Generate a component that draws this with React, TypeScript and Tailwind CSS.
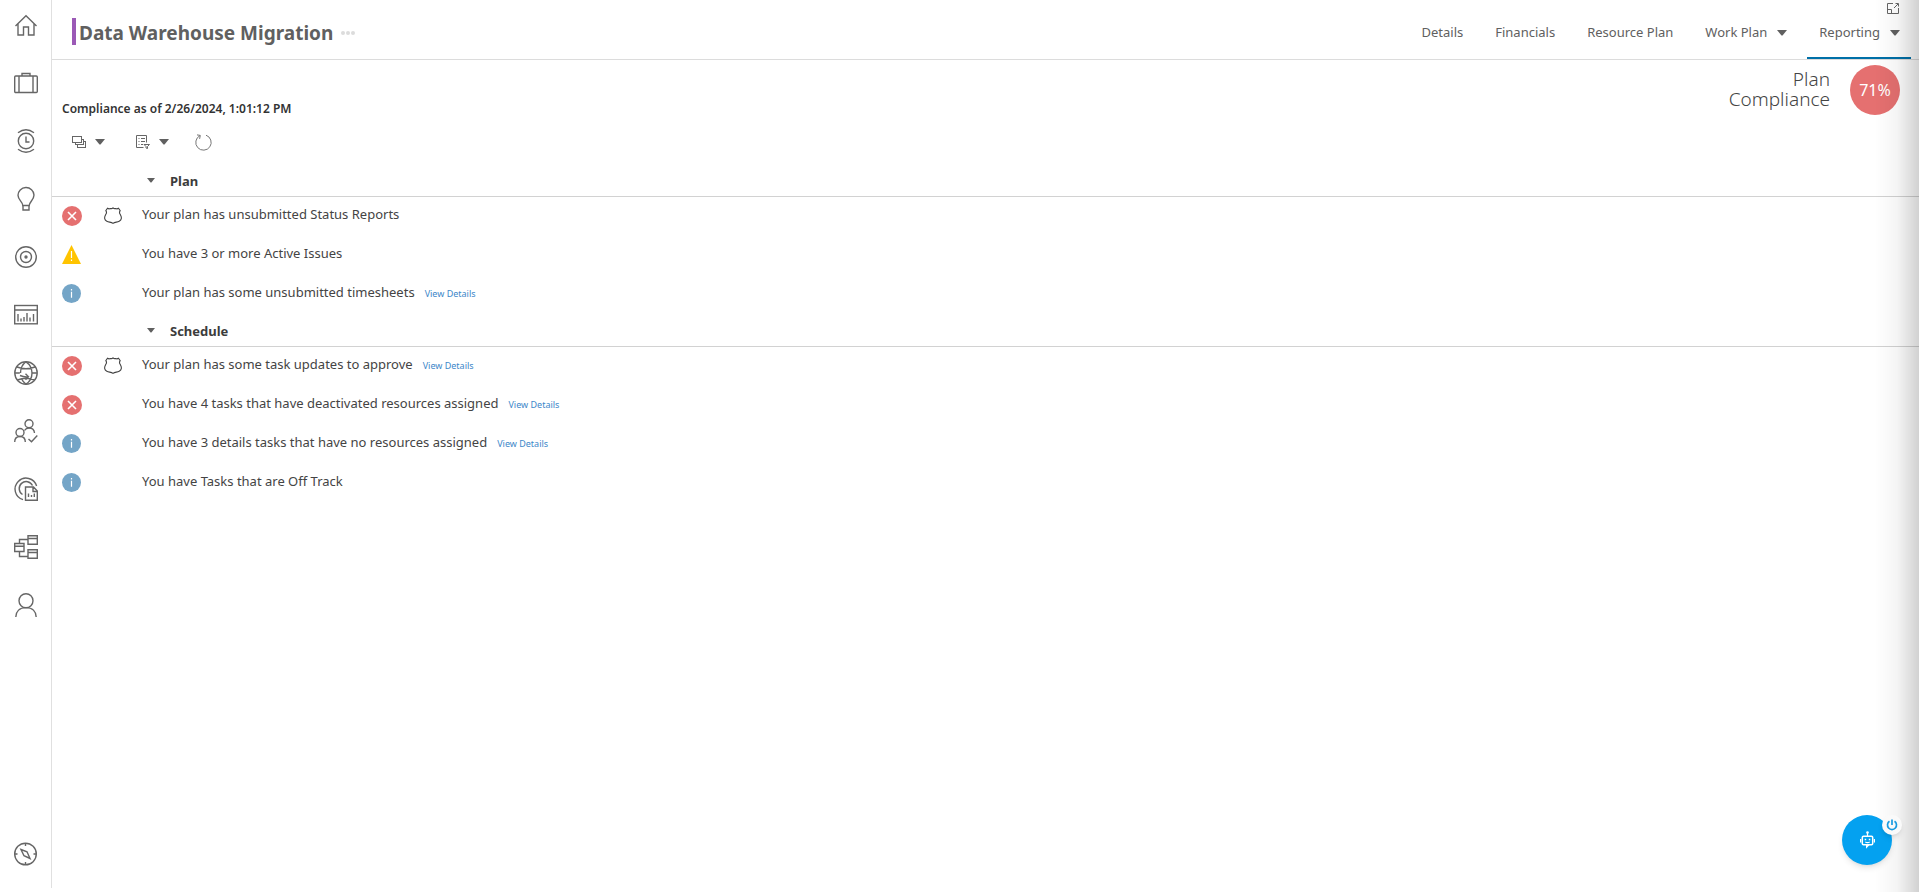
import React from 'react';

type Status = 'error' | 'warning' | 'info';

interface Rule {
  status: Status;
  text: string;
  required?: boolean;
  link?: boolean;
}

interface Group {
  name: string;
  rules: Rule[];
}

const groups: Group[] = [
  {
    name: 'Plan',
    rules: [
      { status: 'error', text: 'Your plan has unsubmitted Status Reports', required: true },
      { status: 'warning', text: 'You have 3 or more Active Issues' },
      { status: 'info', text: 'Your plan has some unsubmitted timesheets', link: true },
    ],
  },
  {
    name: 'Schedule',
    rules: [
      { status: 'error', text: 'Your plan has some task updates to approve', required: true, link: true },
      { status: 'error', text: 'You have 4 tasks that have deactivated resources assigned', link: true },
      { status: 'info', text: 'You have 3 details tasks that have no resources assigned', link: true },
      { status: 'info', text: 'You have Tasks that are Off Track' },
    ],
  },
];

const tabs = [
  { label: 'Details' },
  { label: 'Financials' },
  { label: 'Resource Plan' },
  { label: 'Work Plan', menu: true },
  { label: 'Reporting', menu: true, active: true },
];

const navItems: { label: string; icon: React.ReactNode }[] = [
  {
    label: 'Home',
    icon: <path d="M1.5 13 12 2.8 22.5 13M4 11v11h5.5v-8h5v8H20V11" />,
  },
  {
    label: 'Portfolio',
    icon: (
      <>
        <rect x="0.7" y="5" width="22.6" height="16.5" rx="1" />
        <path d="M5 5v16.5M19 5v16.5M8 5V2.500h8V5" />
      </>
    ),
  },
  {
    label: 'Time',
    icon: (
      <>
        <circle cx="12" cy="12" r="7.7" />
        <path d="M12 7.500V13h3.500M4 3.800q8-6 16 0M4 20.200q8 6 16 0" />
      </>
    ),
  },
  {
    label: 'Ideas',
    icon: (
      <>
        <path d="M8.800 18.500C8.800 15 4 13 4 8.300a8 7.600 0 0 1 16-.3C20 13 15.200 15 15.200 18.500z" />
        <path d="M9 18.500V23h6v-4.500" />
      </>
    ),
  },
  {
    label: 'Goals',
    icon: (
      <>
        <circle cx="12" cy="12" r="10.3" />
        <circle cx="12" cy="12" r="5.5" />
        <circle cx="12" cy="12" r="1" fill="currentColor" />
      </>
    ),
  },
  {
    label: 'Dashboards',
    icon: (
      <>
        <rect x="0.7" y="2.5" width="22.6" height="18.3" />
        <path d="M.7 7h22.600M4 11v7.500M7 15.500v3M10 14v4.500M13 10v8.500M16 14.500v4M19.500 11v7.500" />
      </>
    ),
  },
  {
    label: 'Global',
    icon: (
      <>
        <circle cx="12" cy="12" r="11.2" />
        <path d="M3 6q9 3.500 18 0M3.500 19q8.500-3.500 17 0M6 14.500q4 1.800 8.500 1.300M11.500 12.800l3 3-3 3M6.500 12C6.500 7 9 3 12 .8c4 2.700 6 7 6 11.200 0 4.500-2 8.500-6 11.200-2-1.500-3.300-3-4.200-5M.8 12h5M18 12h5" />
      </>
    ),
  },
  {
    label: 'Resources',
    icon: (
      <>
        <circle cx="15" cy="4.8" r="4" />
        <circle cx="6" cy="13.5" r="4" />
        <path d="M.7 23c0-3.500 2-5.500 5.300-5.500s5.300 2 5.300 5.500M10.500 11.500Q12 9 15 9c3.300 0 5.300 2 5.500 5M14.500 20l3 2.800 5.800-6.300" />
      </>
    ),
  },
  {
    label: 'Reports',
    icon: (
      <>
        <path d="M9 22.700A11 11 0 1 1 22.600 9M8.500 17.500a7 7 0 1 1 10-9" />
        <path d="M11.500 10h8l3.800 4v9.300H11.500zM19 10v4.500h4.300M14.500 16.500V20M17.500 18v2M20.300 16.500V20" />
      </>
    ),
  },
  {
    label: 'Structure',
    icon: (
      <path d="M14 .7h9.300v8.600H14zM14 3.500h9.300M14 14.700h9.300v8.600H14zM14 17.500h9.300M.7 8.500H10v8H.7zM.7 11.300H10M5.500 8.500v-4H14M5.500 16.500v5H14" />
    ),
  },
  {
    label: 'Profile',
    icon: (
      <>
        <circle cx="12" cy="7.8" r="7" />
        <path d="M1.800 24C2 18.500 5.500 14.600 12 14.600S22 18.500 22.200 24" />
      </>
    ),
  },
];

const NavIcon: React.FC<{ children: React.ReactNode }> = ({ children }) => (
  <svg
    viewBox="0 0 24 24"
    className="w-6 h-6 overflow-visible"
    fill="none"
    stroke="currentColor"
    strokeWidth="1.4"
  >
    {children}
  </svg>
);

const Caret: React.FC<{ small?: boolean }> = ({ small }) => (
  <svg
    viewBox="0 0 10 6"
    className={small ? 'w-2 h-[5px]' : 'w-2.5 h-1.5'}
    fill="#606060"
    aria-hidden="true"
  >
    <path d="M0 0h10L5.500 5.500h-1z" />
  </svg>
);

const StatusIcon: React.FC<{ status: Status }> = ({ status }) => {
  if (status === 'error') {
    return (
      <svg viewBox="0 0 20 20" className="w-5 h-5" role="img" aria-label="Error">
        <circle cx="10" cy="10" r="10" fill="#e57070" />
        <path d="M6 6l8 8M14 6l-8 8" stroke="#fff" strokeWidth="1.6" />
      </svg>
    );
  }
  if (status === 'warning') {
    return (
      <svg viewBox="0 0 19 19" className="w-[19px] h-[19px]" role="img" aria-label="Warning">
        <path d="M9.500 0 19 19H0z" fill="#ffc400" />
        <path d="M9.500 6v7M9.500 14.500V16" stroke="#fff" strokeWidth="1.2" />
      </svg>
    );
  }
  return (
    <svg viewBox="0 0 19 19" className="w-[19px] h-[19px]" role="img" aria-label="Information">
      <circle cx="9.5" cy="9.5" r="9.5" fill="#74a5c7" />
      <path d="M9.500 7.700v6M9.500 5v1.400" stroke="#fff" strokeWidth="1.2" />
    </svg>
  );
};

const BadgeIcon = () => (
  <svg
    viewBox="0 0 18 17"
    className="w-[18px] h-[17px]"
    fill="none"
    stroke="#444"
    strokeWidth="1.1"
    role="img"
    aria-label="Required"
  >
    <path d="M3.500 1.300Q5 2.300 6.300 1.500 7.800 2 9 .8q1.200 1.200 2.700.7 1.300.8 2.800-.2l1.700 2.400q-1.500 2 .2 4c1.600 2.800 1.200 5.300-1.200 6.500-2.200 1.100-4.200.9-6.200 2.200-2-1.300-4-1.100-6.200-2.200C.400 13 0 10.500 1.600 7.700q1.700-2 .2-4z" />
  </svg>
);

const Sidebar = () => (
  <nav className="w-[52px] shrink-0 mb-1 border-r border-[#e0e0e0] text-[#666] flex flex-col items-center">
    {navItems.map((item) => (
      <button key={item.label} aria-label={item.label} className="h-[58px] pb-2 shrink-0 flex items-center">
        <NavIcon>{item.icon}</NavIcon>
      </button>
    ))}
    <button aria-label="Explore" className="mt-auto mb-[22px]">
      <NavIcon>
        <circle cx="11.5" cy="12" r="10.8" />
        <path d="M11.500 1v3M11.500 20v3M.7 12h2.800M19.500 12h2.800M7 7.500l6 2.300L16 16.500l-6-2.800z" />
      </NavIcon>
    </button>
  </nav>
);

const Header = () => (
  <header className="h-[60px] shrink-0 border-b border-[#dcdcdc] flex justify-between pl-5 pr-2 text-[#606060]">
    <div className="flex items-center pt-1">
      <span className="w-1 h-[27px] bg-[#9b59b6] mr-[3px]"></span>
      <h1 className="pt-0.5 text-[19px] font-bold leading-7">Data Warehouse Migration</h1>
      <button aria-label="More" className="flex gap-px ml-2 pt-0.5">
        <i className="w-1 h-1 rounded-xs bg-[#dcdcdc]"></i>
        <i className="w-1 h-1 rounded-xs bg-[#dcdcdc]"></i>
        <i className="w-1 h-1 rounded-xs bg-[#dcdcdc]"></i>
      </button>
    </div>
    <div className="relative flex">
      {tabs.map((tab) => (
        <button
          key={tab.label}
          className={
            tab.active
              ? 'flex items-center gap-2.5 pl-3 pr-[11px] pt-2 text-[13px] border-b-2 border-[#0070a8] ml-1'
              : 'flex items-center gap-2.5 px-4 pt-1.5 text-[13px]'
          }
        >
          {tab.label}
          {tab.menu && <Caret />}
        </button>
      ))}
      <button aria-label="Expand" className="absolute top-[3px] right-3">
        <svg viewBox="0 0 12 11" className="w-3 h-[11px]" fill="none" stroke="#666">
          <path d="M6 .5H.5v10h11V5M.5 6.500h4v4M7 5l4-4M8.500.5h3v3" />
        </svg>
      </button>
    </div>
  </header>
);

const Toolbar = () => (
  <div className="h-8 flex items-center pl-5 pt-0.5">
    <button aria-label="View" className="flex items-center gap-[9px]">
      <svg viewBox="0 0 14 13" className="w-[14px] h-[13px]" fill="#fff" stroke="#666">
        <rect x="5.5" y="5.5" width="8" height="6" />
        <rect x="3.5" y="3.5" width="8" height="5" />
        <rect x="0.5" y="0.5" width="9" height="6" />
      </svg>
      <Caret />
    </button>
    <button aria-label="Filter" className="flex items-center gap-[9px] ml-[31px]">
      <svg viewBox="0 0 14 14" className="w-[14px] h-[14px]" fill="none" stroke="#666">
        <path d="M7.500 12.500h-7V.5h10v7M2.500 3.500h1M5 3.500h4M2.500 6.500h1M5 6.500h4M2.500 9.500h1M5 9.500h2M8 9.500h5.500l-2 2v2l-1.500-.5v-1.500z" />
      </svg>
      <Caret />
    </button>
    <button aria-label="Refresh" className="ml-[26px]">
      <svg viewBox="0 0 17 17" className="w-[17px] h-[17px]" fill="none" stroke="#777">
        <path d="M11 1.200A7.700 7.700 0 1 1 5 1.600M2 .9l3.300.5-.7 3.500" />
      </svg>
    </button>
  </div>
);

const RuleGroup: React.FC<{ group: Group }> = ({ group }) => (
  <section>
    <h2 className="h-[33px] border-b border-[#d2d2d2]">
      <button className="h-full flex items-center pl-[95px] gap-[15px] text-[13px] font-bold text-[#3c3c3c]">
        <Caret small />
        <span className="pt-1">{group.name}</span>
      </button>
    </h2>
    <ul>
      {group.rules.map((rule) => (
        <li key={rule.text} className="h-[39px] flex items-center pl-2.5 pb-0.5">
          <span className="w-[42px]">
            <StatusIcon status={rule.status} />
          </span>
          <span className="w-[38px]">{rule.required && <BadgeIcon />}</span>
          <span className="pb-1 text-[13px] leading-5">{rule.text}</span>
          {rule.link && (
            <a href="#" className="ml-2.5 text-[9px] leading-4 text-[#3d87c9]">
              View Details
            </a>
          )}
        </li>
      ))}
    </ul>
  </section>
);

const ChatBot = () => (
  <div className="fixed right-[27px] bottom-[27px] w-[50px] h-[50px]">
    <button
      aria-label="Chat"
      className="w-full h-full rounded-full bg-[#04a1f0] shadow-md flex items-center justify-center"
    >
      <svg viewBox="0 0 15 18" className="w-[15px] h-[18px]" fill="none" stroke="#fff">
        <rect x="2.3" y="5.3" width="10.4" height="8.4" rx="1.2" strokeWidth="1.5" />
        <path d="M7.500 5V2M.6 8v3.500M14.400 8v3.500M5.300 11q2.200 1.300 4.400 0" strokeWidth="1.2" />
        <path d="M6 14h3.500L6 17.700z" fill="#fff" stroke="none" />
        <circle cx="7.5" cy="1.5" r="1.3" fill="#fff" stroke="none" />
        <path d="M4.700 8.500h1.500M8.800 8.500h1.500" strokeWidth="1.5" />
      </svg>
    </button>
    <button
      aria-label="Turn off"
      className="absolute top-0 -right-2.5 w-5 h-5 rounded-full bg-[#fafafa] shadow-md flex items-center justify-center"
    >
      <svg viewBox="0 0 12 12" className="w-3 h-3" fill="none" stroke="#1a9be0" strokeWidth="1.7">
        <path d="M3.500 2.300a4.500 4.500 0 1 0 5 0M6 .5V6" />
      </svg>
    </button>
  </div>
);

export default function App() {
  return (
    <div className="min-h-screen flex bg-white text-[#444] font-['Noto_Sans','Segoe_UI',sans-serif]">
      <Sidebar />
      <div className="flex-1 min-w-0 flex flex-col">
        <Header />
        <main>
          <div className="flex justify-between items-start h-[65px] pl-2.5 pr-[19px] pt-[5px]">
            <p className="pt-[34px] text-xs leading-5 font-semibold text-[#333]">
              Compliance as of 2/26/2024, 1:01:12 PM
            </p>
            <div className="flex items-center gap-5">
              <p className="w-28 pb-0.5 text-right text-[19px] leading-5 font-light">Plan Compliance</p>
              <div className="w-[50px] h-[50px] rounded-full bg-[#e57070] text-white text-base flex items-center justify-center">
                71%
              </div>
            </div>
          </div>
          <Toolbar />
          <div className="pt-[7px]">
            {groups.map((group) => (
              <RuleGroup key={group.name} group={group} />
            ))}
          </div>
        </main>
      </div>
      <div className="fixed inset-y-0 right-0 w-11 pointer-events-none bg-gradient-to-r from-black/0 via-black/4 to-black/18"></div>
      <ChatBot />
    </div>
  );
}
